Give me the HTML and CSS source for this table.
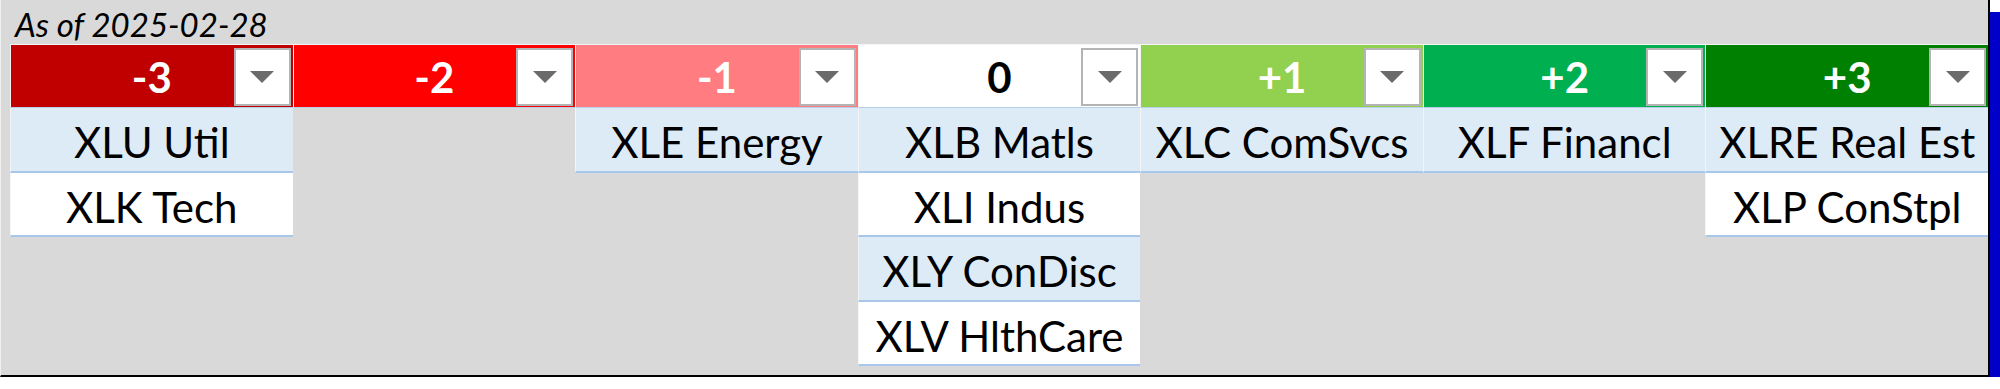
FILE: index.html
```html
<!DOCTYPE html>
<html>
<head>
<meta charset="utf-8">
<link rel="stylesheet" href="styles.css">
</head>
<body>
<div class="sheet">
  <div class="asof">As of 2025-02-28</div>
  <div class="board">
    <div class="col">
      <div class="head h-m3"><span class="label">-3</span><span class="drop"><svg width="24" height="12" viewBox="0 0 24 12"><polygon points="0,0 24,0 12,12" fill="#6b6b6b"/></svg></span></div>
      <div class="cell alt">XLU Util</div>
      <div class="cell">XLK Tech</div>
    </div>
    <div class="col">
      <div class="head h-m2"><span class="label">-2</span><span class="drop"><svg width="24" height="12" viewBox="0 0 24 12"><polygon points="0,0 24,0 12,12" fill="#6b6b6b"/></svg></span></div>
    </div>
    <div class="col">
      <div class="head h-m1"><span class="label">-1</span><span class="drop"><svg width="24" height="12" viewBox="0 0 24 12"><polygon points="0,0 24,0 12,12" fill="#6b6b6b"/></svg></span></div>
      <div class="cell alt">XLE Energy</div>
    </div>
    <div class="col">
      <div class="head h-0"><span class="label">0</span><span class="drop"><svg width="24" height="12" viewBox="0 0 24 12"><polygon points="0,0 24,0 12,12" fill="#6b6b6b"/></svg></span></div>
      <div class="cell alt">XLB Matls</div>
      <div class="cell">XLI Indus</div>
      <div class="cell alt">XLY ConDisc</div>
      <div class="cell">XLV HlthCare</div>
    </div>
    <div class="col">
      <div class="head h-p1"><span class="label">+1</span><span class="drop"><svg width="24" height="12" viewBox="0 0 24 12"><polygon points="0,0 24,0 12,12" fill="#6b6b6b"/></svg></span></div>
      <div class="cell alt">XLC ComSvcs</div>
    </div>
    <div class="col">
      <div class="head h-p2"><span class="label">+2</span><span class="drop"><svg width="24" height="12" viewBox="0 0 24 12"><polygon points="0,0 24,0 12,12" fill="#6b6b6b"/></svg></span></div>
      <div class="cell alt">XLF Financl</div>
    </div>
    <div class="col">
      <div class="head h-p3"><span class="label">+3</span><span class="drop"><svg width="24" height="12" viewBox="0 0 24 12"><polygon points="0,0 24,0 12,12" fill="#6b6b6b"/></svg></span></div>
      <div class="cell alt">XLRE Real Est</div>
      <div class="cell">XLP ConStpl</div>
    </div>
  </div>
</div>
</body>
</html>
```

FILE: styles.css
```css
html, body {
  margin: 0;
  padding: 0;
  background: #ffffff;
}

.sheet {
  box-sizing: border-box;
  width: 1990px;
  height: 377px;
  background: #d9d9d9;
  border-left: 1px solid #f0f0f0;
  border-right: 2px solid #000000;
  border-bottom: 2px solid #000000;
  box-shadow: 10px 12px 0 #0000c8;
  padding-left: 9px;
  font-family: "Lato", "Liberation Sans", sans-serif;
}

.asof {
  box-sizing: border-box;
  height: 44px;
  padding-top: 4px;
  padding-left: 5px;
  font-style: italic;
  font-size: 33px;
  line-height: 40px;
  color: #000;
}

.board {
  display: grid;
  grid-template-columns: repeat(7, 1fr);
  align-items: start;
}

.col {
  display: flex;
  flex-direction: column;
}

.head {
  box-sizing: border-box;
  height: 64px;
  display: grid;
  align-items: center;
  border-top: 1px solid #f4f4f4;
  border-left: 1px solid #f4f4f4;
  border-bottom: 1px solid #b8cfe9;
  color: #ffffff;
  font-weight: 700;
  font-size: 42px;
}

.head .label {
  grid-area: 1 / 1;
  justify-self: center;
  line-height: 1;
  padding-top: 2px;
}

.head .drop {
  grid-area: 1 / 1;
  justify-self: end;
  box-sizing: border-box;
  width: 57px;
  height: 58px;
  margin-right: 2px;
  margin-top: 2px;
  background: #ffffff;
  border: 2px solid #b4b4b4;
  display: flex;
  align-items: center;
  justify-content: center;
}

.head .drop svg {
  display: block;
}

.h-m3 { background: #c00000; }
.h-m2 { background: #ff0000; }
.h-m1 { background: #ff7c80; }
.h-0  { background: #ffffff; color: #000000; }
.h-p1 { background: #92d050; }
.h-p2 { background: #00b050; }
.h-p3 { background: #008000; }

.cell {
  box-sizing: border-box;
  height: 64.5px;
  background: #ffffff;
  border-left: 1px solid #f4f4f4;
  border-bottom: 2px solid #a8c7ea;
  text-align: center;
  font-size: 42px;
  line-height: 68px;
  color: #000000;
  white-space: nowrap;
  overflow: hidden;
}

.cell.alt {
  background: #ddebf7;
}
```
